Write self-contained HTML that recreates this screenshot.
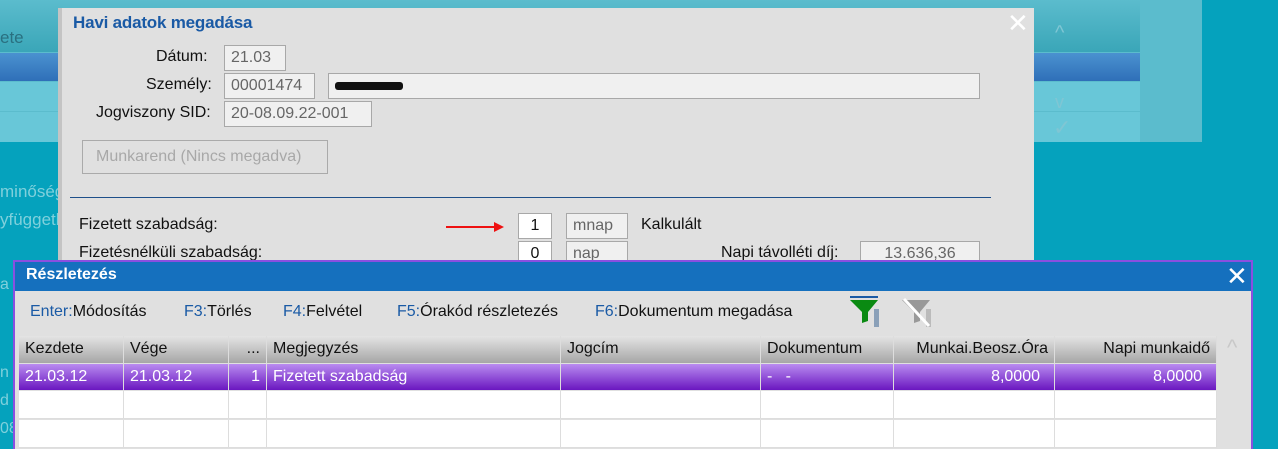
<!DOCTYPE html>
<html><head><meta charset="utf-8"><style>
*{margin:0;padding:0;box-sizing:border-box}
body{width:1278px;height:449px;overflow:hidden;background:#05a2bd;font-family:"Liberation Sans",sans-serif;position:relative;font-size:15px}
.a{position:absolute}
.inp{position:absolute;background:#f0f0f0;border:1px solid #a8a8a8;color:#666;font-size:16px;padding:2px 6px;height:26px;line-height:20px}
.lbl{position:absolute;color:#111;font-size:16px}
.hd{position:absolute;top:336px;height:27px;line-height:25px;font-size:16px;color:#111;background:linear-gradient(#e4e4e4,#a6a6a6);border-right:1px solid #ddd;padding:0 6px}
.rw{position:absolute;top:364px;height:26px;line-height:26px;font-size:16px;color:#fff;background:linear-gradient(#b98cf0,#6a17c0);border-right:1px solid #ddd;padding:0 6px}
.e{position:absolute;height:28px;background:#fff;border-right:1px solid #ddd;border-bottom:1px solid #ddd}
</style></head><body>
<div class="a" style="left:0;top:0;width:1140px;height:142px;background:#5bbccd"></div>
<div class="a" style="left:0;top:0;width:1140px;height:52px;background:linear-gradient(#5bbccd,#3aa6b8)"></div>
<div class="a" style="left:0;top:53px;width:1140px;height:28px;background:linear-gradient(#4a92d0,#2f6fb8)"></div>
<div class="a" style="left:0;top:82px;width:1140px;height:29px;background:#68c7d8"></div>
<div class="a" style="left:0;top:112px;width:1140px;height:30px;background:#68c7d8"></div>
<div class="a" style="left:1140px;top:0;width:62px;height:142px;background:#5bbccd"></div>
<div class="a" style="left:0;top:28px;color:#2a7080;font-size:17px">ete</div>
<div class="a" style="left:1055px;top:22px;color:#7fc6d4;font-size:20px">^</div>
<div class="a" style="left:1055px;top:92px;color:#7fc6d4;font-size:18px">v</div>
<div class="a" style="left:1053px;top:115px;color:#7fc6d4;font-size:22px">✓</div>
<div class="a" style="left:0;top:182px;color:#7fd0dc;font-size:17px">minőség</div>
<div class="a" style="left:0;top:210px;color:#7fd0dc;font-size:17px">yfüggetl</div>
<div class="a" style="left:0;top:276px;color:#7fd0dc;font-size:16px">a</div>
<div class="a" style="left:0;top:364px;color:#7fd0dc;font-size:16px">n</div>
<div class="a" style="left:0;top:392px;color:#7fd0dc;font-size:16px">d</div>
<div class="a" style="left:0;top:420px;color:#7fd0dc;font-size:16px">08</div>
<div class="a" style="left:58px;top:8px;width:976px;height:260px;background:#e0e0e0;border-left:4px solid #c4c4c4"></div>
<div class="a" style="left:73px;top:13px;color:#1a5aa5;font-size:17px;font-weight:bold;letter-spacing:-0.2px">Havi adatok megadása</div>
<div class="a" style="left:1007px;top:8px;color:#fff;font-size:26px">✕</div>
<div class="lbl" style="left:156px;top:48px">Dátum:</div>
<div class="inp" style="left:224px;top:45px;width:62px">21.03</div>
<div class="lbl" style="left:146px;top:76px">Személy:</div>
<div class="inp" style="left:224px;top:73px;width:91px">00001474</div>
<div class="inp" style="left:328px;top:73px;width:652px"><span style="display:inline-block;width:68px;height:8px;background:#111;margin-top:6px;border-radius:3px"></span></div>
<div class="lbl" style="left:96px;top:104px">Jogviszony SID:</div>
<div class="inp" style="left:224px;top:101px;width:148px">20-08.09.22-001</div>
<div class="a" style="left:82px;top:140px;width:246px;height:34px;border:1px solid #aaa;color:#a8a8a8;font-size:16px;line-height:32px;padding-left:13px">Munkarend (Nincs megadva)</div>
<div class="a" style="left:70px;top:197px;width:921px;height:1px;background:#1e4f8a"></div>
<div class="lbl" style="left:79px;top:216px">Fizetett szabadság:</div>
<div class="a" style="left:446px;top:226px;width:52px;height:2px;background:#e11"></div>
<div class="a" style="left:494px;top:222px;border-left:10px solid #e11;border-top:5px solid transparent;border-bottom:5px solid transparent"></div>
<div class="inp" style="left:518px;top:213px;width:34px;background:#fff;color:#111;text-align:center">1</div>
<div class="inp" style="left:566px;top:213px;width:62px">mnap</div>
<div class="lbl" style="left:641px;top:216px">Kalkulált</div>
<div class="lbl" style="left:79px;top:244px">Fizetésnélküli szabadság:</div>
<div class="inp" style="left:518px;top:241px;width:34px;background:#fff;color:#111;text-align:center">0</div>
<div class="inp" style="left:566px;top:241px;width:62px">nap</div>
<div class="lbl" style="left:721px;top:244px">Napi távolléti díj:</div>
<div class="inp" style="left:860px;top:241px;width:120px;text-align:center">13.636,36</div>
<div class="a" style="left:13px;top:260px;width:1240px;height:189px;background:#e0e0e0;border:2px solid #8a4fe0;border-bottom:none"></div>
<div class="a" style="left:15px;top:262px;width:1236px;height:29px;background:#1570be"></div>
<div class="a" style="left:26px;top:266px;color:#fff;font-size:16px;font-weight:bold">Részletezés</div>
<div class="a" style="left:1226px;top:261px;color:#fff;font-size:26px">✕</div>
<div class="a" style="left:30px;top:303px;font-size:16px;color:#111"><span style="color:#1a5aa5">Enter:</span>Módosítás</div>
<div class="a" style="left:184px;top:303px;font-size:16px;color:#111"><span style="color:#1a5aa5">F3:</span>Törlés</div>
<div class="a" style="left:283px;top:303px;font-size:16px;color:#111"><span style="color:#1a5aa5">F4:</span>Felvétel</div>
<div class="a" style="left:397px;top:303px;font-size:16px;color:#111"><span style="color:#1a5aa5">F5:</span>Órakód részletezés</div>
<div class="a" style="left:595px;top:303px;font-size:16px;color:#111"><span style="color:#1a5aa5">F6:</span>Dokumentum megadása</div>
<svg class="a" style="left:848px;top:295px" width="36" height="34"><rect x="2" y="1" width="28" height="2" fill="#1a5aa5"/><path d="M2 5H30L20 17V26L14 28V17Z" fill="#0a8a12"/><rect x="26" y="14" width="5" height="18" fill="#8aa0b8"/></svg>
<svg class="a" style="left:900px;top:295px" width="36" height="34"><path d="M2 5H30L20 17V26L14 28V17Z" fill="#999"/><rect x="26" y="14" width="5" height="18" fill="#bbb"/><line x1="4" y1="4" x2="29" y2="31" stroke="#fff" stroke-width="3"/></svg>
<div class="hd" style="left:19px;width:105px">Kezdete</div>
<div class="hd" style="left:124px;width:105px">Vége</div>
<div class="hd" style="left:229px;width:38px;text-align:right">...</div>
<div class="hd" style="left:267px;width:294px">Megjegyzés</div>
<div class="hd" style="left:561px;width:200px">Jogcím</div>
<div class="hd" style="left:761px;width:133px">Dokumentum</div>
<div class="hd" style="left:894px;width:161px;text-align:right">Munkai.Beosz.Óra</div>
<div class="hd" style="left:1055px;width:162px;text-align:right">Napi munkaidő</div>
<div class="rw" style="left:19px;width:105px">21.03.12</div>
<div class="rw" style="left:124px;width:105px">21.03.12</div>
<div class="rw" style="left:229px;width:38px;text-align:right">1</div>
<div class="rw" style="left:267px;width:294px">Fizetett szabadság</div>
<div class="rw" style="left:561px;width:200px"></div>
<div class="rw" style="left:761px;width:133px">-&nbsp;&nbsp;&nbsp;-</div>
<div class="rw" style="left:894px;width:161px;text-align:right;padding-right:14px">8,0000</div>
<div class="rw" style="left:1055px;width:162px;text-align:right;padding-right:14px">8,0000</div>
<div class="e" style="left:19px;top:391px;width:105px"></div><div class="e" style="left:124px;top:391px;width:105px"></div><div class="e" style="left:229px;top:391px;width:38px"></div><div class="e" style="left:267px;top:391px;width:294px"></div><div class="e" style="left:561px;top:391px;width:200px"></div><div class="e" style="left:761px;top:391px;width:133px"></div><div class="e" style="left:894px;top:391px;width:161px"></div><div class="e" style="left:1055px;top:391px;width:162px"></div>
<div class="e" style="left:19px;top:420px;width:105px"></div><div class="e" style="left:124px;top:420px;width:105px"></div><div class="e" style="left:229px;top:420px;width:38px"></div><div class="e" style="left:267px;top:420px;width:294px"></div><div class="e" style="left:561px;top:420px;width:200px"></div><div class="e" style="left:761px;top:420px;width:133px"></div><div class="e" style="left:894px;top:420px;width:161px"></div><div class="e" style="left:1055px;top:420px;width:162px"></div>
<div class="a" style="left:1227px;top:335px;color:#c8c8c8;font-size:22px">^</div>
</body></html>
